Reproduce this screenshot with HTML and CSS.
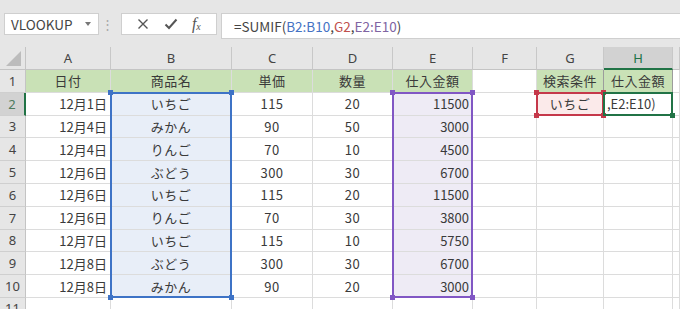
FILE: index.html
```html
<!DOCTYPE html>
<html>

<head>
    <title>SUMIF</title>
    <link rel="stylesheet" href="styles.css">
</head>

<body>
    <div class="toolbar">
        <div class="namebox">
            <span>VLOOKUP</span>
            <span class="caret"></span>
        </div>
        <div class="grip">⋮</div>
        <div class="fbuttons">
            <svg width="12" height="12" viewBox="0 0 12 12">
                <path d="M1.5 1.5 L10.5 10.5 M10.5 1.5 L1.5 10.5" stroke="#555" stroke-width="1.4" fill="none" />
            </svg>
            <svg width="14" height="12" viewBox="0 0 14 12">
                <path d="M1.5 6.5 L5 10 L12.5 1.5" stroke="#555" stroke-width="2" fill="none" />
            </svg>
            <span class="fx"><i>f</i><sub>x</sub></span>
        </div>
        <div class="formula">=SUMIF(<span class="ref-b">B2:B10</span>,<span class="ref-g">G2</span>,<span class="ref-e">E2:E10</span>)</div>
    </div>

    <div class="sheet">
        <div class="cells">
            <!-- column headers -->
            <div class="corner"><span class="tri"></span></div>
            <div class="colh">A</div>
            <div class="colh">B</div>
            <div class="colh">C</div>
            <div class="colh">D</div>
            <div class="colh">E</div>
            <div class="colh">F</div>
            <div class="colh">G</div>
            <div class="colh active">H</div>
            <div class="colh"></div>

            <!-- row 1 -->
            <div class="rowh">1</div>
            <div class="c head">日付</div>
            <div class="c head">商品名</div>
            <div class="c head">単価</div>
            <div class="c head">数量</div>
            <div class="c head">仕入金額</div>
            <div class="c"></div>
            <div class="c head boxed">検索条件</div>
            <div class="c head boxed">仕入金額</div>
            <div class="c"></div>

            <!-- row 2 -->
            <div class="rowh active">2</div>
            <div class="c r">12月1日</div>
            <div class="c m blue">いちご</div>
            <div class="c m">115</div>
            <div class="c m">20</div>
            <div class="c r purple">11500</div>
            <div class="c"></div>
            <div class="c m pink">いちご</div>
            <div class="c l edit">,E2:E10)</div>
            <div class="c"></div>

            <div class="rowh">3</div>
            <div class="c r">12月4日</div>
            <div class="c m blue">みかん</div>
            <div class="c m">90</div>
            <div class="c m">50</div>
            <div class="c r purple">3000</div>
            <div class="c"></div>
            <div class="c"></div>
            <div class="c"></div>
            <div class="c"></div>

            <div class="rowh">4</div>
            <div class="c r">12月4日</div>
            <div class="c m blue">りんご</div>
            <div class="c m">70</div>
            <div class="c m">10</div>
            <div class="c r purple">4500</div>
            <div class="c"></div>
            <div class="c"></div>
            <div class="c"></div>
            <div class="c"></div>

            <div class="rowh">5</div>
            <div class="c r">12月6日</div>
            <div class="c m blue">ぶどう</div>
            <div class="c m">300</div>
            <div class="c m">30</div>
            <div class="c r purple">6700</div>
            <div class="c"></div>
            <div class="c"></div>
            <div class="c"></div>
            <div class="c"></div>

            <div class="rowh">6</div>
            <div class="c r">12月6日</div>
            <div class="c m blue">いちご</div>
            <div class="c m">115</div>
            <div class="c m">20</div>
            <div class="c r purple">11500</div>
            <div class="c"></div>
            <div class="c"></div>
            <div class="c"></div>
            <div class="c"></div>

            <div class="rowh">7</div>
            <div class="c r">12月6日</div>
            <div class="c m blue">りんご</div>
            <div class="c m">70</div>
            <div class="c m">30</div>
            <div class="c r purple">3800</div>
            <div class="c"></div>
            <div class="c"></div>
            <div class="c"></div>
            <div class="c"></div>

            <div class="rowh">8</div>
            <div class="c r">12月7日</div>
            <div class="c m blue">いちご</div>
            <div class="c m">115</div>
            <div class="c m">10</div>
            <div class="c r purple">5750</div>
            <div class="c"></div>
            <div class="c"></div>
            <div class="c"></div>
            <div class="c"></div>

            <div class="rowh">9</div>
            <div class="c r">12月8日</div>
            <div class="c m blue">ぶどう</div>
            <div class="c m">300</div>
            <div class="c m">30</div>
            <div class="c r purple">6700</div>
            <div class="c"></div>
            <div class="c"></div>
            <div class="c"></div>
            <div class="c"></div>

            <div class="rowh">10</div>
            <div class="c r">12月8日</div>
            <div class="c m blue">みかん</div>
            <div class="c m">90</div>
            <div class="c m">20</div>
            <div class="c r purple">3000</div>
            <div class="c"></div>
            <div class="c"></div>
            <div class="c"></div>
            <div class="c"></div>

            <div class="rowh">11</div>
            <div class="c"></div>
            <div class="c"></div>
            <div class="c"></div>
            <div class="c"></div>
            <div class="c"></div>
            <div class="c"></div>
            <div class="c"></div>
            <div class="c"></div>
            <div class="c"></div>
        </div>

        <!-- reference ranges, on a grid laid over the cells -->
        <div class="ranges">
            <div class="range range-b">
                <span class="h tl"></span><span class="h tr"></span><span class="h bl"></span><span class="h br"></span>
            </div>
            <div class="range range-e">
                <span class="h tl"></span><span class="h tr"></span><span class="h bl"></span><span class="h br"></span>
            </div>
            <div class="range range-g">
                <span class="h tl"></span><span class="h tr"></span><span class="h bl"></span><span class="h br"></span>
            </div>
            <div class="range range-h">
                <span class="h br"></span>
            </div>
        </div>
    </div>
</body>

</html>
```

FILE: styles.css
```css
body {
    margin: 0;
    font-family: "Noto Sans CJK JP", "Noto Sans", sans-serif;
    color: #3a3a3a;
    background: #fff;
    overflow: hidden;
}

.toolbar {
    height: 47px;
    background: #e6e6e6;
    display: flex;
    align-items: flex-start;
    padding-top: 13px;
    box-sizing: border-box;
}

.namebox {
    margin-left: 4px;
    width: 95px;
    height: 22px;
    box-sizing: border-box;
    background: #fff;
    border: 1px solid #cfcfcf;
    display: flex;
    align-items: center;
    padding-left: 6px;
    font-size: 13.5px;
    color: #444;
}

.namebox .caret {
    margin-left: 12px;
    width: 0;
    height: 0;
    border-left: 3px solid transparent;
    border-right: 3px solid transparent;
    border-top: 4px solid #777;
}

.grip {
    width: 22px;
    height: 22px;
    line-height: 22px;
    text-align: center;
    font-size: 13px;
    color: #a8a8a8;
    padding-right: 6px;
    box-sizing: border-box;
}

.fbuttons {
    width: 96px;
    height: 22px;
    box-sizing: border-box;
    background: #fff;
    border: 1px solid #cfcfcf;
    display: flex;
    align-items: center;
    justify-content: space-around;
    padding: 0 8px;
}

.fx {
    font-family: "Liberation Serif", serif;
    font-size: 16px;
    color: #555;
    line-height: 1;
}

.fx sub {
    font-size: 10px;
    font-style: italic;
    vertical-align: -1px;
}

.formula {
    flex: 1;
    margin-left: 4px;
    height: 26px;
    box-sizing: border-box;
    background: #fff;
    border: 1px solid #cfcfcf;
    border-right: none;
    padding-left: 12px;
    line-height: 24px;
    font-size: 13.5px;
    color: #444;
}

.ref-b {
    color: #4472c4;
}

.ref-g {
    color: #c0504d;
}

.ref-e {
    color: #8064a2;
}

/* sheet */
.sheet {
    position: relative;
}

.cells,
.ranges {
    display: grid;
    grid-template-columns: 26px 85px 121px 81px 80px 80px 64px 67px 69px 1fr;
    grid-template-rows: 23px repeat(10, 22.8px) 22px;
    font-size: 13px;
}

.ranges {
    position: absolute;
    inset: 0;
    pointer-events: none;
}

.cells > div {
    box-sizing: border-box;
    border-right: 1px solid #dcdcdc;
    border-bottom: 1px solid #dcdcdc;
    display: flex;
    align-items: center;
    white-space: nowrap;
    overflow: hidden;
}

.corner {
    background: #e6e6e6;
    position: relative;
    border-color: #c4c4c4 !important;
}

.corner .tri {
    position: absolute;
    right: 4px;
    bottom: 3px;
    width: 0;
    height: 0;
    border-left: 15px solid transparent;
    border-bottom: 15px solid #bcbcbc;
}

.colh {
    background: #e6e6e6;
    justify-content: center;
    color: #444;
    font-family: "Noto Sans", sans-serif;
    font-size: 13px;
    border-right-color: #c8c8c8 !important;
    border-bottom-color: #c4c4c4 !important;
}

.colh.active {
    background: #d2d2d2;
    color: #217346;
    border-bottom: 2px solid #217346 !important;
}

.rowh {
    background: #e6e6e6;
    justify-content: center;
    color: #444;
    font-family: "Noto Sans", sans-serif;
    font-size: 13px;
    border-right-color: #c4c4c4 !important;
    border-bottom-color: #cfcfcf !important;
}

.rowh.active {
    background: #d2d2d2;
    color: #4d7a5d;
    border-right: 2px solid #217346 !important;
}

.c.r {
    justify-content: flex-end;
    padding-right: 3px;
}

.c.m {
    justify-content: center;
    letter-spacing: 0.5px;
}

.c.l {
    padding-left: 3px;
}

.c.head {
    background: #c9e1b6;
    justify-content: center;
    letter-spacing: 0.5px;
}

.c.boxed {
    border-right-color: #9c9c9c;
    border-bottom-color: #9c9c9c;
}

.c.blue {
    background: #e8eef8;
}

.c.purple {
    background: #eeebf5;
}

.c.pink {
    background: #fbeaea;
}

/* reference ranges drawn over the cells */
.range {
    border: 2px solid currentColor;
    margin: -1px 0 0 -1px;
    position: relative;
}

.range-b {
    grid-column: 3;
    grid-row: 3 / span 9;
    color: #3e73c6;
}

.range-e {
    grid-column: 6;
    grid-row: 3 / span 9;
    color: #8157c4;
}

.range-g {
    grid-column: 8;
    grid-row: 3;
    color: #c5384a;
}

.range-h {
    grid-column: 9;
    grid-row: 3;
    color: #217346;
}

.h {
    position: absolute;
    width: 5px;
    height: 5px;
    background: currentColor;
}

.tl {
    left: -4px;
    top: -4px;
}

.tr {
    right: -4px;
    top: -4px;
}

.bl {
    left: -4px;
    bottom: -4px;
}

.br {
    right: -4px;
    bottom: -4px;
}
```
